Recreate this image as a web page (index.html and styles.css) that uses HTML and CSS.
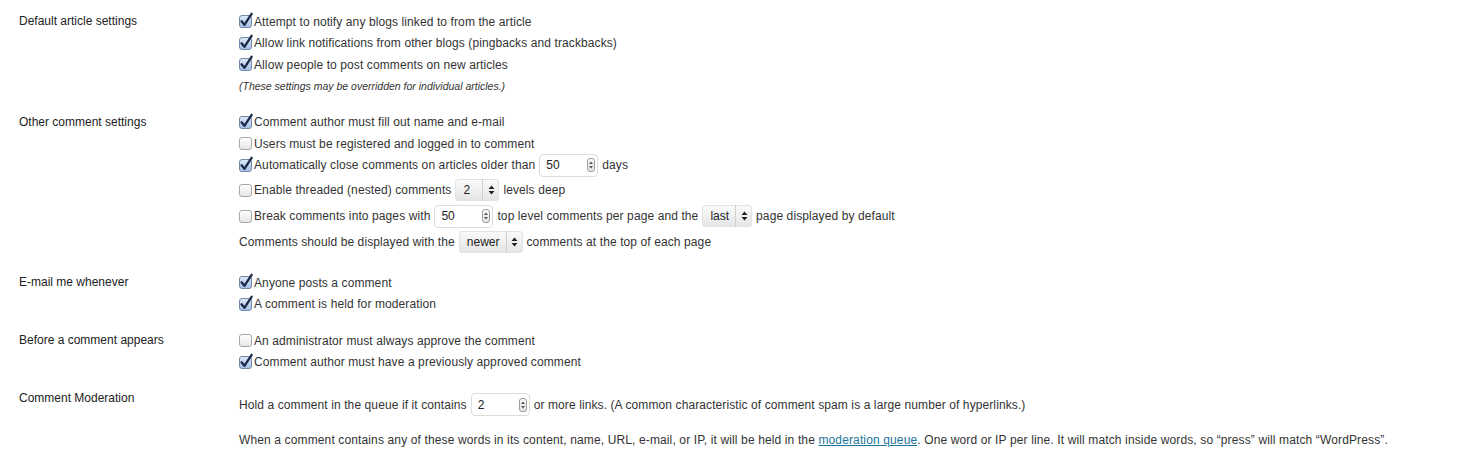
FILE: index.html
```html
<!DOCTYPE html>
<html lang="en">
<head>
  <meta charset="UTF-8">
  <title>Discussion Settings</title>
  <link rel="stylesheet" href="styles.css">
</head>
<body>
  <div class="settings">

    <div class="section s-default">
      <div class="label">Default article settings</div>
      <div class="fields">
        <div class="line"><label class="opt"><span class="check on"><svg width="13" height="13" viewBox="0 0 13 13"><path d="M2.5 6.3 L5.4 9.8 L12.6 -1.2"/></svg></span>Attempt to notify any blogs linked to from the article</label></div>
        <div class="line"><label class="opt"><span class="check on"><svg width="13" height="13" viewBox="0 0 13 13"><path d="M2.5 6.3 L5.4 9.8 L12.6 -1.2"/></svg></span>Allow link notifications from other blogs (pingbacks and trackbacks)</label></div>
        <div class="line"><label class="opt"><span class="check on"><svg width="13" height="13" viewBox="0 0 13 13"><path d="M2.5 6.3 L5.4 9.8 L12.6 -1.2"/></svg></span>Allow people to post comments on new articles</label></div>
        <p class="note">(These settings may be overridden for individual articles.)</p>
      </div>
    </div>

    <div class="section s-other">
      <div class="label">Other comment settings</div>
      <div class="fields">
        <div class="line"><label class="opt"><span class="check on"><svg width="13" height="13" viewBox="0 0 13 13"><path d="M2.5 6.3 L5.4 9.8 L12.6 -1.2"/></svg></span>Comment author must fill out name and e-mail</label></div>
        <div class="line"><label class="opt"><span class="check"></span>Users must be registered and logged in to comment</label></div>
        <div class="line"><label class="opt"><span class="check on"><svg width="13" height="13" viewBox="0 0 13 13"><path d="M2.5 6.3 L5.4 9.8 L12.6 -1.2"/></svg></span>Automatically close comments on articles older than</label>
          <span class="num"><span>50</span><span class="spin"><svg width="6" height="10" viewBox="0 0 6 10"><path d="M3 1.5 L5 4 H1Z M1 6 H5 L3 8.5Z"/></svg></span></span>
          <span>days</span></div>
        <div class="line field"><label class="opt"><span class="check"></span>Enable threaded (nested) comments</label>
          <span class="select select-levels"><span class="val">2</span><span class="arrows"><svg width="7" height="10" viewBox="0 0 7 10"><path d="M3.5 0.5 L6.5 4 H0.5Z M0.5 6 H6.5 L3.5 9.5Z"/></svg></span></span>
          <span>levels deep</span></div>
        <div class="line field"><label class="opt"><span class="check"></span>Break comments into pages with</label>
          <span class="num"><span>50</span><span class="spin"><svg width="6" height="10" viewBox="0 0 6 10"><path d="M3 1.5 L5 4 H1Z M1 6 H5 L3 8.5Z"/></svg></span></span>
          <span>top level comments per page and the</span>
          <span class="select"><span class="val">last</span><span class="arrows"><svg width="7" height="10" viewBox="0 0 7 10"><path d="M3.5 0.5 L6.5 4 H0.5Z M0.5 6 H6.5 L3.5 9.5Z"/></svg></span></span>
          <span>page displayed by default</span></div>
        <div class="line field"><span>Comments should be displayed with the</span>
          <span class="select"><span class="val">newer</span><span class="arrows"><svg width="7" height="10" viewBox="0 0 7 10"><path d="M3.5 0.5 L6.5 4 H0.5Z M0.5 6 H6.5 L3.5 9.5Z"/></svg></span></span>
          <span>comments at the top of each page</span></div>
      </div>
    </div>

    <div class="section s-email">
      <div class="label">E-mail me whenever</div>
      <div class="fields">
        <div class="line"><label class="opt"><span class="check on"><svg width="13" height="13" viewBox="0 0 13 13"><path d="M2.5 6.3 L5.4 9.8 L12.6 -1.2"/></svg></span>Anyone posts a comment</label></div>
        <div class="line"><label class="opt"><span class="check on"><svg width="13" height="13" viewBox="0 0 13 13"><path d="M2.5 6.3 L5.4 9.8 L12.6 -1.2"/></svg></span>A comment is held for moderation</label></div>
      </div>
    </div>

    <div class="section s-before">
      <div class="label">Before a comment appears</div>
      <div class="fields">
        <div class="line"><label class="opt"><span class="check"></span>An administrator must always approve the comment</label></div>
        <div class="line"><label class="opt"><span class="check on"><svg width="13" height="13" viewBox="0 0 13 13"><path d="M2.5 6.3 L5.4 9.8 L12.6 -1.2"/></svg></span>Comment author must have a previously approved comment</label></div>
      </div>
    </div>

    <div class="section s-moderation">
      <div class="label">Comment Moderation</div>
      <div class="fields">
        <div class="line field"><span>Hold a comment in the queue if it contains</span>
          <span class="num"><span>2</span><span class="spin"><svg width="6" height="10" viewBox="0 0 6 10"><path d="M3 1.5 L5 4 H1Z M1 6 H5 L3 8.5Z"/></svg></span></span>
          <span>or more links. (A common characteristic of comment spam is a large number of hyperlinks.)</span></div>
        <div class="line words"><span>When a comment contains any of these words in its content, name, URL, e-mail, or IP, it will be held in the <a href="#">moderation queue</a>. One word or IP per line. It will match inside words, so “press” will match “WordPress”.</span></div>
      </div>
    </div>

  </div>
</body>
</html>
```

FILE: styles.css
```css
* {
  box-sizing: border-box;
}
body {
  margin: 0;
  padding-top: 1px;
  background: #fff;
  color: #333;
  font-family: "Liberation Sans", Arial, sans-serif;
  font-size: 12px;
  letter-spacing: 0.1px;
}
a {
  color: #21759b;
}

.section {
  display: grid;
  grid-template-columns: 220px 1fr;
  padding: 10px 0 8px 19px;
}
.s-default {
  padding-bottom: 9px;
}
.s-other {
  padding-bottom: 7px;
}
.s-email {
  padding-bottom: 5px;
}
.s-before {
  padding-bottom: 5px;
}
.label {
  line-height: 21.5px;
  color: #222;
  letter-spacing: 0;
}

.line {
  display: flex;
  align-items: center;
  gap: 4px;
  height: 21.5px;
  white-space: nowrap;
}
.line.field {
  height: 26px;
  margin-top: 1px;
}
.line.field + .line.field {
  margin-top: 0;
}
.s-moderation .fields {
  padding-top: 2.75px;
}
.line.words {
  margin-top: 11.25px;
  letter-spacing: 0.13px;
}
.opt {
  display: flex;
  align-items: center;
  gap: 2px;
}
.note {
  margin: 4px 0 0;
  font-size: 10.5px;
  font-style: italic;
  line-height: 13px;
  letter-spacing: 0;
}

/* checkbox */
.check {
  position: relative;
  flex: none;
  width: 13px;
  height: 13px;
  border: 1px solid #a8a8a8;
  border-radius: 3px;
  background: linear-gradient(#fff, #e6e6e6);
}
.check.on {
  border-color: #7186a8;
  background: linear-gradient(#dce8f7, #a7c2e6);
}
.check svg {
  position: absolute;
  left: -1px;
  top: -1px;
  overflow: visible;
}
.check path {
  fill: none;
  stroke: #1c2848;
  stroke-width: 2.3;
  stroke-linecap: round;
  stroke-linejoin: round;
}

/* number input */
.num {
  display: flex;
  align-items: center;
  justify-content: space-between;
  width: 59px;
  height: 23px;
  padding: 0 2px 0 6px;
  border: 1px solid #dcdcdc;
  border-radius: 4px;
  background: #fff;
  color: #222;
  letter-spacing: 0;
}
.spin {
  display: flex;
  align-items: center;
  justify-content: center;
  width: 8px;
  height: 14px;
  border: 1px solid #9c9c9c;
  border-radius: 3px;
  background: linear-gradient(#fafafa, #e4e4e4);
}
.spin path {
  fill: #555;
}

/* select */
.select {
  display: flex;
  align-items: center;
  height: 22px;
  border-radius: 4px;
  background: linear-gradient(#fbfbfb, #e4e4e4);
  box-shadow: inset 0 0 0 1px #e2e2e2;
  color: #222;
  letter-spacing: 0;
}
.select .val {
  flex: 1;
  padding: 0 6px 0 8px;
}
.select-levels {
  width: 44px;
}
.select .arrows {
  display: flex;
  align-items: center;
  justify-content: center;
  width: 17px;
  height: 100%;
  border-left: 1px solid #cfcfcf;
}
.select path {
  fill: #222;
}
```
